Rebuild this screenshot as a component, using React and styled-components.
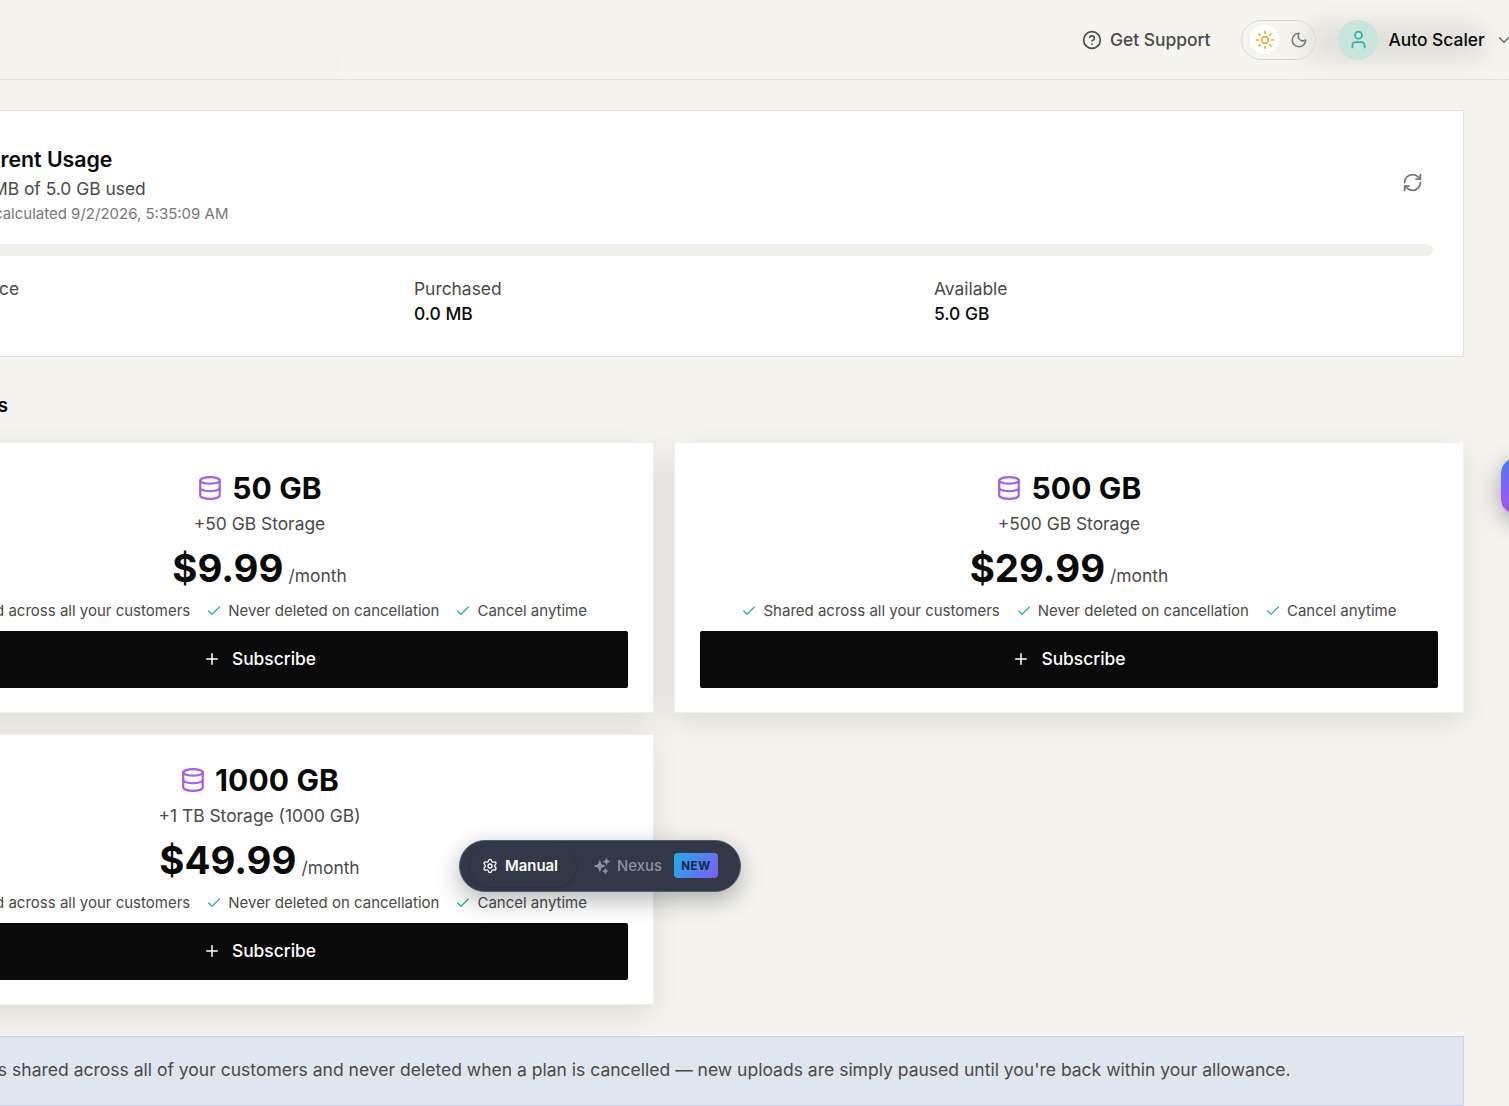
import React from 'react';
import styled, { createGlobalStyle } from 'styled-components';
import { CircleHelp, Sun, Moon, User, ChevronDown, RefreshCw, Database, Check, Plus, Settings } from 'lucide-react';
import { HiSparkles } from 'react-icons/hi2';

const GlobalStyle = createGlobalStyle`
    html, body {
        margin: 0;
        padding: 0;
        background: #f5f4ef;
        overflow: hidden;
    }
    * {
        box-sizing: border-box;
    }
    body {
        font-family: Inter, "Liberation Sans", sans-serif;
        color: #0a0a0a;
    }
`;

const Page = styled.div`
    position: relative;
    width: 1509px;
    height: 1106px;
    overflow: hidden;
    background: #f5f4ef;
`;

const TopBar = styled.header`
    position: relative;
    isolation: isolate;
    display: flex;
    align-items: center;
    width: 1530px;
    height: 80px;
    padding-left: 1082px;
    border-bottom: 1px solid #e3e2dc;

    &::after {
        content: '';
        position: absolute;
        left: 0;
        top: 54px;
        width: 340px;
        height: 22px;
        z-index: -1;
        background: rgba(120, 118, 110, 0.018);
        filter: blur(6px);
    }
`;

const SupportLink = styled.a`
    display: flex;
    align-items: center;
    gap: 8px;
    font-size: 17.4px;
    font-weight: 500;
    color: #4a4a48;
`;

const ThemeToggle = styled.div`
    display: flex;
    align-items: center;
    width: 75px;
    height: 40px;
    margin-left: 31px;
    padding-left: 8px;
    border: 1px solid #d9d8d2;
    border-radius: 20px;
    color: #77777a;
`;

const ThemeKnob = styled.span`
    display: flex;
    align-items: center;
    justify-content: center;
    width: 29px;
    height: 29px;
    margin-right: 11px;
    border-radius: 50%;
    background: #fff;
    color: #f0a72c;
`;

const UserMenu = styled.div`
    position: relative;
    display: flex;
    align-items: center;
    margin-left: 22px;
    font-size: 17.4px;
    font-weight: 500;

    &::before {
        content: '';
        position: absolute;
        inset: 6px 30px 2px -30px;
        z-index: -1;
        background: rgba(120, 118, 110, 0.2);
        filter: blur(14px);
    }
`;

const Avatar = styled.span`
    display: flex;
    align-items: center;
    justify-content: center;
    width: 40px;
    height: 40px;
    margin-right: 10px;
    border-radius: 50%;
    background: #c9e3dd;
    color: #2bb79d;
`;

const Caret = styled(ChevronDown)`
    margin-left: 10px;
    color: #66666a;
`;

const Main = styled.main`
    display: flex;
    flex-direction: column;
    width: 1599px;
    margin-left: -135px;
    padding-top: 30px;
`;

const UsageCard = styled.section`
    height: 247px;
    padding: 35px 30px 0 28px;
    background: #fff;
    border: 1px solid #e3e2dc;
`;

const UsageTop = styled.div`
    display: flex;
    justify-content: space-between;
    align-items: flex-start;
    height: 98px;
    padding-left: 69px;
    padding-right: 10px;
`;

const UsageTitle = styled.h2`
    margin: 0;
    font-size: 21.3px;
    line-height: 26px;
    font-weight: 600;
`;

const UsageLine = styled.p`
    margin: 5px 0 0 -2px;
    font-size: 17.4px;
    line-height: 24px;
    color: #4a4a48;
`;

const UsageStamp = styled.p`
    margin: 2px 0 0 -3px;
    font-size: 15px;
    line-height: 22px;
    color: #77777a;
`;

const RefreshIcon = styled(RefreshCw)`
    margin-top: 26px;
    color: #77777a;
`;

const Track = styled.div`
    height: 12px;
    border-radius: 6px;
    background: #f0efea;
`;

const Stats = styled.div`
    display: grid;
    grid-template-columns: repeat(3, 520px);
    margin-top: 21px;
`;

const StatLabel = styled.div`
    font-size: 17.4px;
    line-height: 24px;
    color: #4a4a48;
`;

const StatValue = styled.div`
    margin-top: 1px;
    font-size: 17.4px;
    line-height: 24px;
    font-weight: 500;
`;

const SectionTitle = styled.h3`
    margin: 35px 0 24px 15px;
    font-size: 19.2px;
    line-height: 26px;
    font-weight: 600;
`;

const PlanGrid = styled.div`
    display: grid;
    grid-template-columns: 789px 790px;
    grid-auto-rows: 271px;
    column-gap: 20px;
    row-gap: 21px;
`;

const PlanCard = styled.article`
    display: flex;
    flex-direction: column;
    align-items: center;
    padding: 25px 25px 0;
    background: #fff;
    border: 1px solid #f1f0ec;
    box-shadow: 0 10px 30px rgba(60, 58, 50, 0.13);
`;

const PlanName = styled.div`
    display: flex;
    align-items: center;
    gap: 9px;
    height: 40px;
    font-size: 30px;
    font-weight: 700;
    letter-spacing: 0.15px;
`;

const PlanIcon = styled(Database)`
    color: #a45ee8;
`;

const PlanDesc = styled.div`
    margin-top: 3px;
    font-size: 17.4px;
    line-height: 26px;
    color: #4a4a48;
`;

const PriceRow = styled.div`
    display: flex;
    align-items: baseline;
    gap: 5px;
    margin-top: 4px;
    height: 54px;
`;

const Price = styled.span`
    font-size: 38.4px;
    line-height: 54px;
    font-weight: 700;
`;

const Period = styled.span`
    font-size: 17.4px;
    color: #4a4a48;
`;

const Features = styled.ul`
    display: flex;
    gap: 16px;
    margin: 5px 0 9px;
    padding: 0;
    list-style: none;
    font-size: 15px;
    line-height: 22px;
    color: #4a4a48;
`;

const Feature = styled.li`
    display: flex;
    align-items: center;
    gap: 6px;
    white-space: nowrap;
`;

const CheckIcon = styled(Check)`
    color: #2bb79d;
`;

const SubscribeButton = styled.button`
    display: flex;
    align-items: center;
    justify-content: center;
    gap: 11px;
    width: 100%;
    height: 57px;
    padding-bottom: 3px;
    border: 0;
    border-radius: 2px;
    background: #0a0a0a;
    color: #fff;
    font-family: inherit;
    font-size: 17.4px;
    font-weight: 500;
`;

const Note = styled.div`
    height: 70px;
    margin-top: 31px;
    padding: 20px 0 0 58px;
    background: #e0e6ef;
    border: 1px solid #c8d2e4;
    font-size: 17.52px;
    line-height: 26px;
    color: #4a4a48;
    white-space: nowrap;
`;

const ModeSwitch = styled.div`
    position: absolute;
    left: 459px;
    top: 840px;
    display: flex;
    align-items: center;
    width: 282px;
    height: 52px;
    padding: 0 0 1px 10px;
    border: 1px solid #47606e;
    border-radius: 26px;
    background: #323848;
    box-shadow: 0 8px 24px rgba(20, 24, 36, 0.32);
    font-size: 14.9px;
`;

const ModeTab = styled.span`
    display: flex;
    align-items: center;
    gap: ${p => (p.$active ? '7px' : '6px')};
    height: 42px;
    padding: ${p => (p.$active ? '0 18px 0 12px' : '0 0 0 17px')};
    border-radius: 21px;
    font-weight: ${p => (p.$active ? 600 : 500)};
    color: ${p => (p.$active ? '#fff' : '#8b90a0')};
    box-shadow: ${p => (p.$active ? '0 1px 3px rgba(20, 24, 36, 0.25)' : 'none')};
`;

const NewBadge = styled.span`
    display: flex;
    align-items: center;
    justify-content: center;
    width: 44px;
    height: 25px;
    margin-left: 12px;
    border-radius: 4px;
    background: linear-gradient(120deg, #22aee8, #7c5df0);
    color: #13284a;
    font-size: 11.5px;
    font-weight: 700;
    letter-spacing: 0.6px;
`;

const SideTab = styled.div`
    position: absolute;
    left: 1501px;
    top: 458px;
    width: 56px;
    height: 56px;
    border-radius: 15px;
    background: linear-gradient(180deg, #4f78f5, #a855f0);
    box-shadow: 0 6px 24px rgba(40, 38, 50, 0.42);
`;

const plans = [
    { name: '50 GB', desc: '+50 GB Storage', price: '$9.99' },
    { name: '500 GB', desc: '+500 GB Storage', price: '$29.99' },
    { name: '1000 GB', desc: '+1 TB Storage (1000 GB)', price: '$49.99' },
];

const features = ['Shared across all your customers', 'Never deleted on cancellation', 'Cancel anytime'];

const App = () => {
    return (
        <Page>
            <GlobalStyle />
            <TopBar>
                <SupportLink>
                    <CircleHelp size={20} strokeWidth={2} />
                    Get Support
                </SupportLink>
                <ThemeToggle>
                    <ThemeKnob><Sun size={20} strokeWidth={2} /></ThemeKnob>
                    <Moon size={18} strokeWidth={2} />
                </ThemeToggle>
                <UserMenu>
                    <Avatar><User size={21} strokeWidth={2} /></Avatar>
                    Auto Scaler
                    <Caret size={18} strokeWidth={2} />
                </UserMenu>
            </TopBar>
            <Main>
                <UsageCard>
                    <UsageTop>
                        <div>
                            <UsageTitle>Current Usage</UsageTitle>
                            <UsageLine>0.0 MB of 5.0 GB used</UsageLine>
                            <UsageStamp>Last calculated 9/2/2026, 5:35:09 AM</UsageStamp>
                        </div>
                        <RefreshIcon size={21} strokeWidth={2} />
                    </UsageTop>
                    <Track />
                    <Stats>
                        <div>
                            <StatLabel>Plan Allowance</StatLabel>
                            <StatValue>5.0 GB</StatValue>
                        </div>
                        <div>
                            <StatLabel>Purchased</StatLabel>
                            <StatValue>0.0 MB</StatValue>
                        </div>
                        <div>
                            <StatLabel>Available</StatLabel>
                            <StatValue>5.0 GB</StatValue>
                        </div>
                    </Stats>
                </UsageCard>
                <SectionTitle>Storage Plans</SectionTitle>
                <PlanGrid>
                    {plans.map(plan => (
                        <PlanCard key={plan.name}>
                            <PlanName><PlanIcon size={26} strokeWidth={2} />{plan.name}</PlanName>
                            <PlanDesc>{plan.desc}</PlanDesc>
                            <PriceRow>
                                <Price>{plan.price}</Price>
                                <Period>/month</Period>
                            </PriceRow>
                            <Features>
                                {features.map(f => (
                                    <Feature key={f}><CheckIcon size={16} strokeWidth={2} />{f}</Feature>
                                ))}
                            </Features>
                            <SubscribeButton><Plus size={18} strokeWidth={2} />Subscribe</SubscribeButton>
                        </PlanCard>
                    ))}
                </PlanGrid>
                <Note>
                    Storage is shared across all of your customers and never deleted when a plan is cancelled — new uploads are simply paused until you're back within your allowance.
                </Note>
            </Main>
            <ModeSwitch>
                <ModeTab $active><Settings size={16} strokeWidth={2} />Manual</ModeTab>
                <ModeTab><HiSparkles size={18} />Nexus</ModeTab>
                <NewBadge>NEW</NewBadge>
            </ModeSwitch>
            <SideTab />
        </Page>
    );
};

export default App;
